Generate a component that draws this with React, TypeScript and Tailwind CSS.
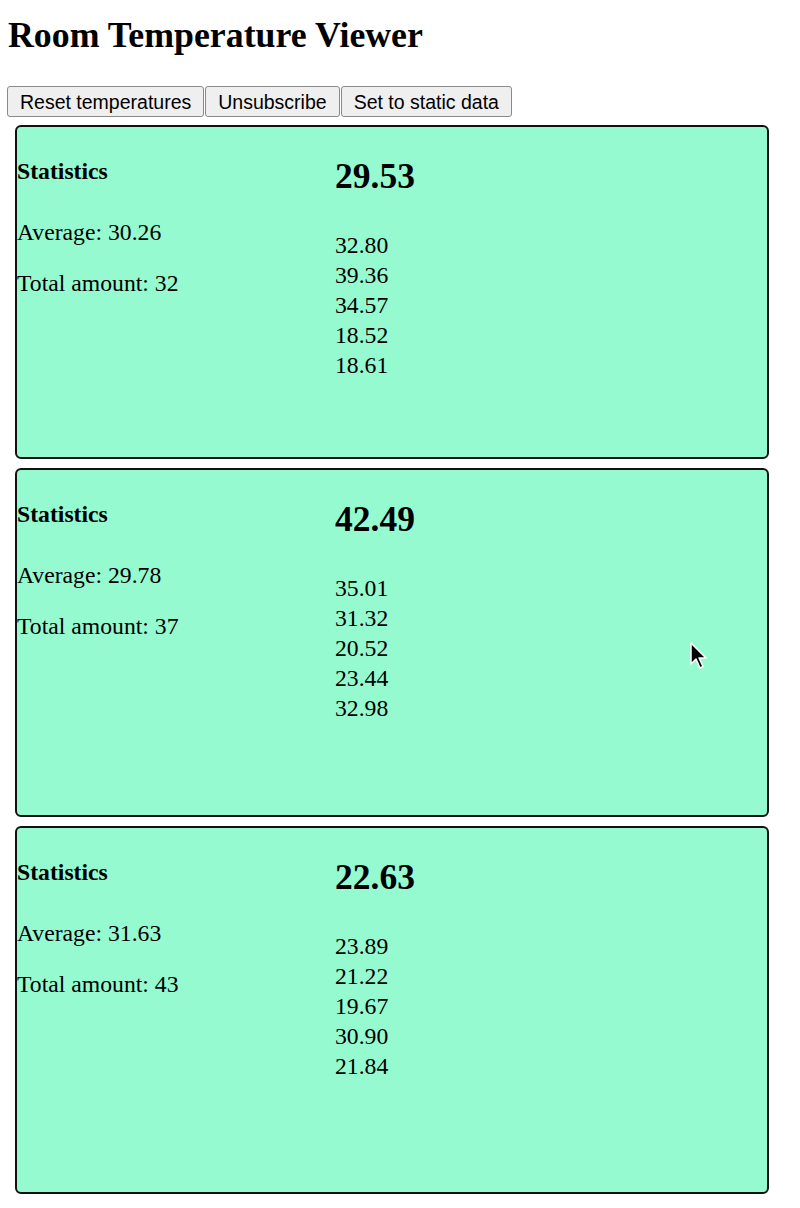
import React from 'react';

interface Room {
  current: string;
  average: string;
  total: number;
  temps: string[];
  height: string;
  cursor?: boolean;
}

const rooms: Room[] = [
  { current: '29.53', average: '30.26', total: 32, temps: ['32.80', '39.36', '34.57', '18.52', '18.61'], height: 'h-[334px]' },
  { current: '42.49', average: '29.78', total: 37, temps: ['35.01', '31.32', '20.52', '23.44', '32.98'], height: 'h-[349px]', cursor: true },
  { current: '22.63', average: '31.63', total: 43, temps: ['23.89', '21.22', '19.67', '30.90', '21.84'], height: 'h-[368px]' },
];

function Cursor() {
  return (
    <svg className="absolute left-[672px] top-[172px]" width="20" height="30" viewBox="0 0 20 30">
      <path
        d="M2 1 L2 22 L7 17 L11 26 L14 24.5 L10 16 L17 16 Z"
        fill="#000"
        stroke="#fff"
        strokeWidth="1.5"
        strokeLinejoin="round"
      />
    </svg>
  );
}

function RoomCard({ room }: { room: Room }) {
  return (
    <div className={`relative ml-[15px] w-[754px] ${room.height} rounded-[6px] border-2 border-[#111] bg-[#96fad1] flex`}>
      <div className="w-[318px]">
        <p className="mt-[29px] text-[23.7px] leading-[30px] font-bold">Statistics</p>
        <p className="mt-[31px] text-[23.7px] leading-[30px]">Average: {room.average}</p>
        <p className="mt-[21px] text-[23.7px] leading-[30px]">Total amount: {room.total}</p>
      </div>
      <div className="flex-1">
        <h2 className="mt-[29px] text-[35.5px] leading-[40px] font-bold">{room.current}</h2>
        <div className="mt-[34px]">
          {room.temps.map((t, i) => (
            <div key={i} className="text-[23.7px] leading-[30px]">{t}</div>
          ))}
        </div>
      </div>
      {room.cursor && <Cursor />}
    </div>
  );
}

export default function App() {
  return (
    <div className="min-h-[1208px] bg-white text-black font-['Liberation_Serif',serif] pb-[14px]">
      <h1 className="pt-[15px] pl-[8px] text-[35.8px] leading-[40px] font-bold">Room Temperature Viewer</h1>
      <div className="mt-[31px] ml-[7px] flex gap-px font-['Liberation_Sans',Arial,sans-serif]">
        {['Reset temperatures', 'Unsubscribe', 'Set to static data'].map((label) => (
          <button
            key={label}
            className="h-[31px] px-[12px] rounded-[3px] border border-[#8a8a8a] bg-[#efefef] text-[19.5px] leading-[28px] text-black"
          >
            {label}
          </button>
        ))}
      </div>
      <div className="mt-[8px] flex flex-col gap-[9px]">
        {rooms.map((room, i) => (
          <RoomCard key={i} room={room} />
        ))}
      </div>
    </div>
  );
}
